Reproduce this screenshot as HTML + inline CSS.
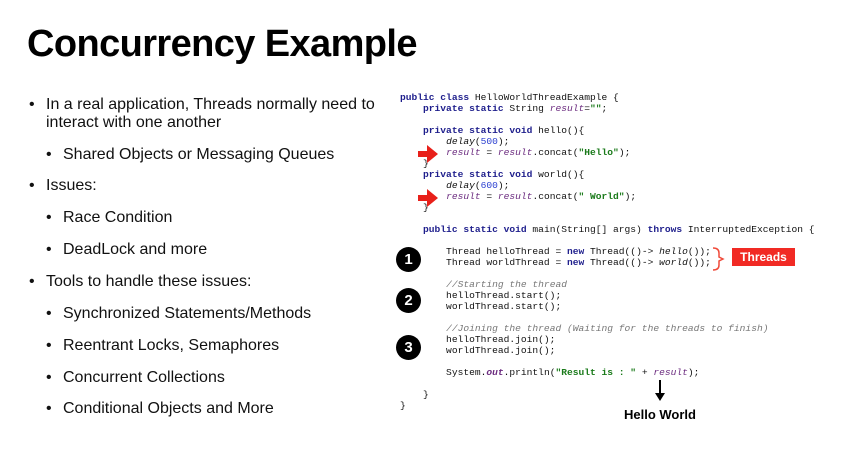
<!DOCTYPE html>
<html><head><style>
body{margin:0;width:845px;height:457px;background:#fff;position:relative;overflow:hidden;font-family:"Liberation Sans",Arial,sans-serif;}
h1{position:absolute;left:27px;top:23px;margin:0;font-size:38px;font-weight:bold;letter-spacing:-0.6px;color:#000;}
.b{position:absolute;font-size:16px;color:#111;white-space:nowrap;}
.b:before{content:"•";position:absolute;left:-17px;}
.nb:before{content:""}
.c{position:absolute;font-family:"Liberation Mono",monospace;font-size:9.6px;white-space:pre;color:#111;line-height:11px;}
.k{color:#1e1e8c;font-weight:bold}.v{color:#6b2b7f;font-style:italic}.s{color:#1a7a1a;font-weight:bold}.n{color:#2a3fd0}.i{font-style:italic}.cm{color:#777;font-style:italic}
.num{position:absolute;width:25px;height:25px;border-radius:50%;background:#000;color:#fff;font-weight:bold;font-size:15px;text-align:center;line-height:25px;}
</style></head><body>
<h1>Concurrency Example</h1>
<div class="b" style="left:46px;top:96px">In a real application, Threads normally need to</div>
<div class="b nb" style="left:46px;top:114px;">interact with one another</div>
<div class="b" style="left:63px;top:146px">Shared Objects or Messaging Queues</div>
<div class="b" style="left:46px;top:177px">Issues:</div>
<div class="b" style="left:63px;top:209px">Race Condition</div>
<div class="b" style="left:63px;top:241px">DeadLock and more</div>
<div class="b" style="left:46px;top:273px">Tools to handle these issues:</div>
<div class="b" style="left:63px;top:305px">Synchronized Statements/Methods</div>
<div class="b" style="left:63px;top:337px">Reentrant Locks, Semaphores</div>
<div class="b" style="left:63px;top:369px">Concurrent Collections</div>
<div class="b" style="left:63px;top:400px">Conditional Objects and More</div>

<div class="c" style="left:400px;top:92px"><span class="k">public class</span> HelloWorldThreadExample {
    <span class="k">private static</span> String <span class="v">result</span>=<span class="s">""</span>;

    <span class="k">private static void</span> hello(){
        <span class="i">delay</span>(<span class="n">500</span>);
        <span class="v">result</span> = <span class="v">result</span>.concat(<span class="s">"Hello"</span>);
    }
    <span class="k">private static void</span> world(){
        <span class="i">delay</span>(<span class="n">600</span>);
        <span class="v">result</span> = <span class="v">result</span>.concat(<span class="s">" World"</span>);
    }

    <span class="k">public static void</span> main(String[] args) <span class="k">throws</span> InterruptedException {

        Thread helloThread = <span class="k">new</span> Thread(()-&gt; <span class="i">hello</span>());
        Thread worldThread = <span class="k">new</span> Thread(()-&gt; <span class="i">world</span>());

        <span class="cm">//Starting the thread</span>
        helloThread.start();
        worldThread.start();

        <span class="cm">//Joining the thread (Waiting for the threads to finish)</span>
        helloThread.join();
        worldThread.join();

        System.<span class="v" style="font-weight:bold">out</span>.println(<span class="s">"Result is : "</span> + <span class="v">result</span>);

    }
}</div>
<svg style="position:absolute;left:0;top:0" width="845" height="457">
<path d="M418 151h9v-6l11 9-11 9v-6h-9z" fill="#e8201a"/>
<path d="M418 195h9v-6l11 9-11 9v-6h-9z" fill="#e8201a"/>
<path d="M713 248q6 0 6 5v4l4 2-4 2v4q0 5-6 5" fill="none" stroke="#f04a3a" stroke-width="1.5"/>
<line x1="660" y1="380" x2="660" y2="395" stroke="#000" stroke-width="2"/>
<path d="M655 393l5 8 5-8z" fill="#000"/>
</svg>
<div style="position:absolute;left:732px;top:248px;width:63px;height:18px;background:#f12a24;color:#fff;font-weight:bold;font-size:12px;text-align:center;line-height:18px;">Threads</div>
<div class="num" style="left:396px;top:247px">1</div>
<div class="num" style="left:396px;top:288px">2</div>
<div class="num" style="left:396px;top:335px">3</div>
<div style="position:absolute;left:624px;top:407px;font-weight:bold;font-size:13px;">Hello World</div>
</body></html>
